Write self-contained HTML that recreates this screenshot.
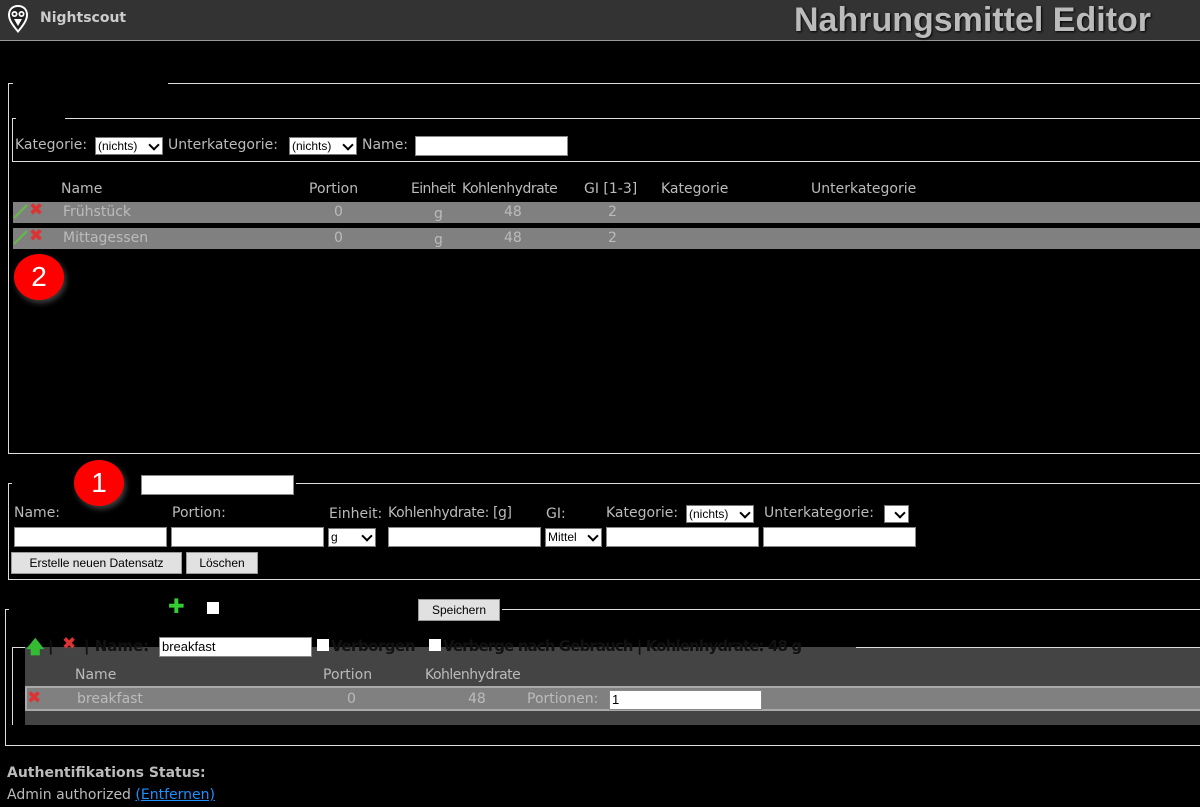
<!DOCTYPE html>
<html><head><meta charset="utf-8"><style>
*{margin:0;padding:0;box-sizing:border-box}
body{width:1200px;height:807px;background:#000;position:relative;overflow:hidden;font-family:"DejaVu Sans",sans-serif;color:#bbb;font-size:14px}
.a{position:absolute;white-space:nowrap}
.ln{position:absolute;background:#ddd}
.inp{position:absolute;background:#fff;border:1px solid #888;height:20px;color:#000;font-size:12px;padding-left:2px;line-height:18px;font-family:"Liberation Sans",sans-serif}
.sel{position:absolute;background:#fff;border:1px solid #777;color:#000;font-size:12px;height:18px;line-height:16px;padding-left:2px;font-family:"Liberation Sans",sans-serif}
.sel:after{content:"";position:absolute;right:4px;top:3px;width:6px;height:6px;border-right:2px solid #000;border-bottom:2px solid #000;transform:rotate(45deg)}
.btn{position:absolute;background:#e1e1e1;border:1px solid #999;color:#000;font-size:12px;text-align:center;height:22px;line-height:20px;font-family:"Liberation Sans",sans-serif}
.row{position:absolute;background:#808080;color:#b8b8b8}
.x{position:absolute;color:#d33;font-weight:bold;font-size:17px;line-height:17px}
.badge{position:absolute;width:50px;height:46px;border-radius:50%;background:#f00;color:#fff;font-size:28px;text-align:center;line-height:46px;box-shadow:2px 3px 6px rgba(255,255,255,.25);font-family:"Liberation Sans",sans-serif}
</style></head><body>
<div class="a" style="left:0;top:0;width:1200px;height:41px;background:#333;border-bottom:1px solid #999"></div>
<svg class="a" style="left:7px;top:4px" width="22" height="30" viewBox="0 0 22 30"><path d="M11 1C5 1 1 5 1 11c0 6 5 12 10 18 5-6 10-12 10-18C21 5 17 1 11 1z" fill="#fff"/><path d="M11 3C6 3 3 6 3 11c0 5 4 10 8 15 4-5 8-10 8-15 0-5-3-8-8-8z" fill="#222"/><circle cx="7.5" cy="10" r="3" fill="#fff"/><circle cx="14.5" cy="10" r="3" fill="#fff"/><circle cx="7.5" cy="10" r="1.3" fill="#222"/><circle cx="14.5" cy="10" r="1.3" fill="#222"/><path d="M7 15l4 7 4-7z" fill="#fff"/></svg>
<div class="a" style="left:40px;top:10px;font-weight:bold;font-size:14px;color:#ccc">Nightscout</div>
<div class="a" style="left:794px;top:1px;font-weight:bold;font-size:34px;color:#bbb;text-shadow:1px 1px 2px #000;font-family:'Liberation Sans',sans-serif">Nahrungsmittel Editor</div>

<div class="ln" style="left:8px;top:83px;width:1px;height:371px"></div>
<div class="ln" style="left:8px;top:83px;width:5px;height:1px"></div>
<div class="ln" style="left:168px;top:83px;width:1032px;height:1px"></div>
<div class="ln" style="left:8px;top:453px;width:1192px;height:1px"></div>
<div class="ln" style="left:12px;top:118px;width:1px;height:44px"></div>
<div class="ln" style="left:12px;top:118px;width:4px;height:1px"></div>
<div class="ln" style="left:65px;top:118px;width:1135px;height:1px"></div>
<div class="ln" style="left:12px;top:161px;width:1188px;height:1px"></div>
<div class="a" style="left:15px;top:137px">Kategorie:</div>
<div class="sel" style="left:95px;top:137px;width:68px">(nichts)</div>
<div class="a" style="left:168px;top:137px">Unterkategorie:</div>
<div class="sel" style="left:289px;top:137px;width:68px">(nichts)</div>
<div class="a" style="left:362px;top:137px">Name:</div>
<div class="inp" style="left:415px;top:136px;width:153px"></div>

<div class="a" style="left:61px;top:181px">Name</div>
<div class="a" style="left:309px;top:181px">Portion</div>
<div class="a" style="left:411px;top:181px;letter-spacing:-0.6px">Einheit</div>
<div class="a" style="left:462px;top:181px;letter-spacing:-0.5px">Kohlenhydrate</div>
<div class="a" style="left:584px;top:181px">GI [1-3]</div>
<div class="a" style="left:661px;top:181px">Kategorie</div>
<div class="a" style="left:811px;top:181px">Unterkategorie</div>
<div class="row" style="left:13px;top:202px;width:1187px;height:21px"></div>
<div class="row" style="left:13px;top:228px;width:1187px;height:21px"></div>
<div class="a" style="left:63px;top:204px">Frühstück</div>
<div class="a" style="left:63px;top:230px">Mittagessen</div>
<div class="a" style="left:334px;top:204px">0</div><div class="a" style="left:334px;top:230px">0</div>
<div class="a" style="left:434px;top:206px">g</div><div class="a" style="left:434px;top:232px">g</div>
<div class="a" style="left:504px;top:204px">48</div><div class="a" style="left:504px;top:230px">48</div>
<div class="a" style="left:608px;top:204px">2</div><div class="a" style="left:608px;top:230px">2</div>
<svg class="a" style="left:13px;top:203px" width="16" height="16"><path d="M1 15L14 2" stroke="#6b4" stroke-width="2"/></svg>
<svg class="a" style="left:13px;top:229px" width="16" height="16"><path d="M1 15L14 2" stroke="#6b4" stroke-width="2"/></svg>
<div class="x" style="left:29px;top:202px">✖</div>
<div class="x" style="left:29px;top:228px">✖</div>
<div class="badge" style="left:14px;top:254px">2</div>

<div class="ln" style="left:8px;top:483px;width:1px;height:97px"></div>
<div class="ln" style="left:8px;top:483px;width:4px;height:1px"></div>
<div class="ln" style="left:296px;top:483px;width:904px;height:1px"></div>
<div class="ln" style="left:8px;top:579px;width:1192px;height:1px"></div>
<div class="badge" style="left:74px;top:460px">1</div>
<div class="inp" style="left:141px;top:475px;width:153px"></div>
<div class="a" style="left:14px;top:505px">Name:</div>
<div class="a" style="left:172px;top:505px">Portion:</div>
<div class="a" style="left:329px;top:506px">Einheit:</div>
<div class="a" style="left:388px;top:505px;letter-spacing:-0.4px">Kohlenhydrate: [g]</div>
<div class="a" style="left:546px;top:506px">GI:</div>
<div class="a" style="left:606px;top:505px">Kategorie:</div>
<div class="sel" style="left:686px;top:505px;width:68px">(nichts)</div>
<div class="a" style="left:764px;top:505px">Unterkategorie:</div>
<div class="sel" style="left:884px;top:505px;width:25px"></div>
<div class="inp" style="left:14px;top:527px;width:153px"></div>
<div class="inp" style="left:171px;top:527px;width:153px"></div>
<div class="sel" style="left:328px;top:528px;width:48px;height:19px">g</div>
<div class="inp" style="left:388px;top:527px;width:153px"></div>
<div class="sel" style="left:545px;top:528px;width:57px;height:19px">Mittel</div>
<div class="inp" style="left:606px;top:527px;width:153px"></div>
<div class="inp" style="left:763px;top:527px;width:153px"></div>
<div class="btn" style="left:11px;top:552px;width:171px">Erstelle neuen Datensatz</div>
<div class="btn" style="left:186px;top:552px;width:72px">Löschen</div>

<div class="ln" style="left:5px;top:609px;width:1px;height:137px"></div>
<div class="ln" style="left:5px;top:609px;width:4px;height:1px"></div>
<div class="ln" style="left:502px;top:609px;width:698px;height:1px"></div>
<div class="ln" style="left:5px;top:745px;width:1195px;height:1px"></div>
<div class="a" style="left:168px;top:596px;color:#3c3;font-weight:bold;font-size:20px;line-height:20px">✚</div>
<div class="a" style="left:207px;top:602px;width:12px;height:12px;background:#fff"></div>
<div class="btn" style="left:418px;top:599px;width:82px">Speichern</div>
<div class="a" style="left:25px;top:647px;width:1175px;height:78px;background:#444"></div>
<div class="ln" style="left:12px;top:647px;width:13px;height:1px"></div>
<div class="ln" style="left:856px;top:647px;width:344px;height:1px"></div>
<div class="ln" style="left:12px;top:647px;width:1px;height:78px"></div>
<div class="a" style="left:26px;top:635px;color:#3b3;font-weight:bold;font-size:18px">🡅</div>
<div class="x" style="left:62px;top:636px">✖</div>
<div class="a" style="left:48px;top:637px;color:#111;font-weight:bold;font-size:15px">|</div>
<div class="a" style="left:84px;top:637px;color:#111;font-weight:bold;font-size:15px">| Name:</div>
<div class="inp" style="left:159px;top:637px;width:153px;font-size:13px">breakfast</div>
<div class="a" style="left:317px;top:639px;width:12px;height:12px;background:#fff"></div>
<div class="a" style="left:331px;top:637px;color:#111;font-weight:bold;font-size:15px;letter-spacing:-0.5px">Verborgen</div>
<div class="a" style="left:429px;top:639px;width:12px;height:12px;background:#fff"></div>
<div class="a" style="left:443px;top:637px;color:#111;font-weight:bold;font-size:15px;letter-spacing:-0.9px">Verberge nach Gebrauch | Kohlenhydrate: 48 g</div>
<div class="a" style="left:75px;top:667px">Name</div>
<div class="a" style="left:323px;top:667px">Portion</div>
<div class="a" style="left:425px;top:667px;letter-spacing:-0.5px">Kohlenhydrate</div>
<div class="row" style="left:25px;top:686px;width:1175px;height:25px;border:2px solid #aaa;border-right:none"></div>
<div class="x" style="left:27px;top:690px">✖</div>
<div class="a" style="left:77px;top:691px">breakfast</div>
<div class="a" style="left:347px;top:691px">0</div>
<div class="a" style="left:468px;top:691px">48</div>
<div class="a" style="left:527px;top:691px">Portionen:</div>
<div class="inp" style="left:609px;top:690px;width:153px;font-size:13px">1</div>

<div class="a" style="left:7px;top:765px;font-weight:bold">Authentifikations Status:</div>
<div class="a" style="left:7px;top:787px">Admin authorized <span style="color:#1e90ff;text-decoration:underline">(Entfernen)</span></div>
</body></html>
